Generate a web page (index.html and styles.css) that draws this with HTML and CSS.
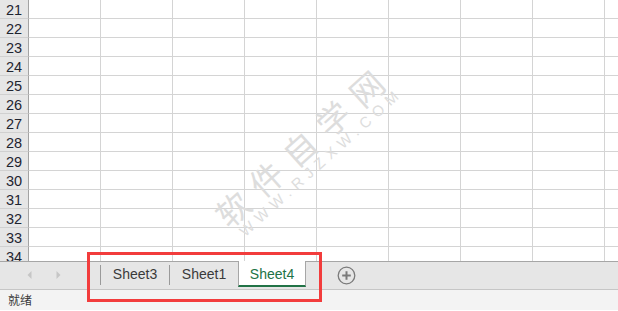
FILE: index.html
```html
<!DOCTYPE html>
<html>
<head>
<meta charset="utf-8">
<link rel="stylesheet" href="styles.css">
</head>
<body>
<div class="app">
  <div class="sheet">
    <div class="row"><div class="rh">21</div><div class="c"></div><div class="c"></div><div class="c"></div><div class="c"></div><div class="c"></div><div class="c"></div><div class="c"></div><div class="c"></div><div class="c"></div></div>
    <div class="row"><div class="rh">22</div><div class="c"></div><div class="c"></div><div class="c"></div><div class="c"></div><div class="c"></div><div class="c"></div><div class="c"></div><div class="c"></div><div class="c"></div></div>
    <div class="row"><div class="rh">23</div><div class="c"></div><div class="c"></div><div class="c"></div><div class="c"></div><div class="c"></div><div class="c"></div><div class="c"></div><div class="c"></div><div class="c"></div></div>
    <div class="row"><div class="rh">24</div><div class="c"></div><div class="c"></div><div class="c"></div><div class="c"></div><div class="c"></div><div class="c"></div><div class="c"></div><div class="c"></div><div class="c"></div></div>
    <div class="row"><div class="rh">25</div><div class="c"></div><div class="c"></div><div class="c"></div><div class="c"></div><div class="c"></div><div class="c"></div><div class="c"></div><div class="c"></div><div class="c"></div></div>
    <div class="row"><div class="rh">26</div><div class="c"></div><div class="c"></div><div class="c"></div><div class="c"></div><div class="c"></div><div class="c"></div><div class="c"></div><div class="c"></div><div class="c"></div></div>
    <div class="row"><div class="rh">27</div><div class="c"></div><div class="c"></div><div class="c"></div><div class="c"></div><div class="c"></div><div class="c"></div><div class="c"></div><div class="c"></div><div class="c"></div></div>
    <div class="row"><div class="rh">28</div><div class="c"></div><div class="c"></div><div class="c"></div><div class="c"></div><div class="c"></div><div class="c"></div><div class="c"></div><div class="c"></div><div class="c"></div></div>
    <div class="row"><div class="rh">29</div><div class="c"></div><div class="c"></div><div class="c"></div><div class="c"></div><div class="c"></div><div class="c"></div><div class="c"></div><div class="c"></div><div class="c"></div></div>
    <div class="row"><div class="rh">30</div><div class="c"></div><div class="c"></div><div class="c"></div><div class="c"></div><div class="c"></div><div class="c"></div><div class="c"></div><div class="c"></div><div class="c"></div></div>
    <div class="row"><div class="rh">31</div><div class="c"></div><div class="c"></div><div class="c"></div><div class="c"></div><div class="c"></div><div class="c"></div><div class="c"></div><div class="c"></div><div class="c"></div></div>
    <div class="row"><div class="rh">32</div><div class="c"></div><div class="c"></div><div class="c"></div><div class="c"></div><div class="c"></div><div class="c"></div><div class="c"></div><div class="c"></div><div class="c"></div></div>
    <div class="row"><div class="rh">33</div><div class="c"></div><div class="c"></div><div class="c"></div><div class="c"></div><div class="c"></div><div class="c"></div><div class="c"></div><div class="c"></div><div class="c"></div></div>
    <div class="row"><div class="rh">34</div><div class="c"></div><div class="c"></div><div class="c"></div><div class="c"></div><div class="c"></div><div class="c"></div><div class="c"></div><div class="c"></div><div class="c"></div></div>
  </div>
  <div class="tabbar">
    <div class="nav">
      <svg class="arrow" width="5" height="8" viewBox="0 0 5 8"><path d="M4.5 0 L0.5 4 L4.5 8 Z" fill="#c6c6c6"/></svg>
      <svg class="arrow" width="5" height="8" viewBox="0 0 5 8"><path d="M0.5 0 L4.5 4 L0.5 8 Z" fill="#c6c6c6"/></svg>
    </div>
    <div class="sep"></div>
    <div class="tab">Sheet3</div>
    <div class="sep"></div>
    <div class="tab">Sheet1</div>
    <div class="tab active">Sheet4</div>
    <div class="add">
      <svg width="19" height="19" viewBox="0 0 19 19"><circle cx="9.5" cy="9.5" r="8.3" fill="none" stroke="#7a7a7a" stroke-width="1.3"/><path d="M9.5 5.2 V13.8 M5.2 9.5 H13.8" stroke="#7a7a7a" stroke-width="2"/></svg>
    </div>
  </div>
  <div class="status">就绪</div>
  <div class="wm wm-big">软件自学网</div>
  <div class="wm wm-small">WWW.RJZXW.COM</div>
  <div class="mark"></div>
</div>
</body>
</html>
```
FILE: styles.css
```css
html, body {
  margin: 0;
  padding: 0;
}
body {
  width: 618px;
  height: 311px;
  overflow: hidden;
  background: #ffffff;
  font-family: "Liberation Sans", Arial, sans-serif;
}
.app {
  position: relative;
  width: 618px;
  height: 311px;
  overflow: hidden;
}
.sheet {
  height: 262px;
  overflow: hidden;
}
.row {
  display: flex;
  height: 19px;
}
.rh {
  width: 22px;
  flex: none;
  padding-left: 6px;
  background: #e6e6e6;
  border-right: 1px solid #a3a3a3;
  border-bottom: 1px solid #d0d0d0;
  height: 18px;
  font-size: 14.5px;
  line-height: 20px;
  color: #1f2430;
}
.c {
  width: 71px;
  flex: none;
  height: 18px;
  border-right: 1px solid #d4d4d4;
  border-bottom: 1px solid #d4d4d4;
}
.tabbar {
  display: flex;
  height: 27px;
  background: #e6e6e6;
  border-top: 1px solid #a6a6a6;
  border-bottom: 1px solid #c6c6c6;
  margin-top: -1px;
  position: relative;
  z-index: 1;
}
.nav {
  width: 100px;
  flex: none;
  display: flex;
  align-items: center;
  gap: 24px;
  padding-left: 27px;
  box-sizing: border-box;
  height: 25px;
}
.sep {
  width: 1px;
  height: 20px;
  margin-top: 3px;
  background: #9a9a9a;
  flex: none;
}
.tab {
  width: 68px;
  flex: none;
  text-align: center;
  font-size: 14px;
  line-height: 25px;
  height: 25px;
  color: #3a3a3a;
}
.tab.active {
  width: 66px;
  height: 24px;
  margin-top: -1px;
  background: #ffffff;
  color: #217346;
  border-left: 1px solid #a6a6a6;
  border-right: 1px solid #a6a6a6;
  border-bottom: 2px solid #217346;
  line-height: 26px;
}
.add {
  margin-left: 31px;
  height: 25px;
  display: flex;
  align-items: center;
  padding-top: 1px;
}
.add svg {
  display: block;
}
.status {
  height: 20px;
  background: #f3f3f3;
  font-family: "Noto Sans CJK SC", sans-serif;
  font-size: 12px;
  line-height: 20px;
  padding-left: 8px;
  color: #3a3a3a;
}
.wm {
  position: absolute;
  color: #dddddd;
  white-space: nowrap;
  text-align: center;
  box-sizing: border-box;
  transform-origin: center center;
  transform: rotate(-42deg);
}
.wm-big {
  left: 149px;
  top: 130px;
  width: 300px;
  height: 36px;
  font-family: "Noto Sans CJK SC", sans-serif;
  font-size: 33px;
  line-height: 36px;
  letter-spacing: 12px;
  padding-left: 12px;
  font-weight: 400;
}
.wm-small {
  left: 189px;
  top: 155px;
  width: 260px;
  height: 18px;
  font-family: "Liberation Sans", sans-serif;
  font-size: 15px;
  line-height: 18px;
  letter-spacing: 6px;
  padding-left: 6px;
}
.mark {
  position: absolute;
  left: 87px;
  top: 252px;
  width: 229px;
  height: 44px;
  border: 3px solid #f23c3c;
  z-index: 2;
}
```
